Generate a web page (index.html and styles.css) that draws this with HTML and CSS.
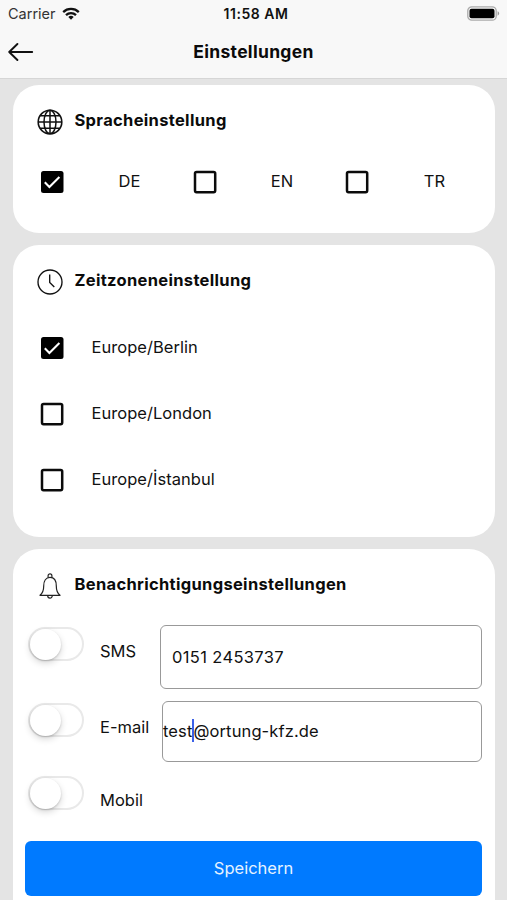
FILE: index.html
```
<!DOCTYPE html>
<html lang="de">
<head>
<meta charset="utf-8">
<title>Einstellungen</title>
<link rel="stylesheet" href="styles.css">
</head>
<body>
<header class="top">
  <div class="status">
    <div class="carrier"><span>Carrier</span>
      <svg class="wifi" width="18" height="14" viewBox="0 0 18 14" fill="none" stroke="#111" stroke-width="2.3"><path d="M1.2 5.1a11.2 11.2 0 0 1 15.6 0M4 8.1a7.2 7.2 0 0 1 10 0"/><path d="M9 12.8 6.3 10.1a3.900 3.900 0 0 1 5.400 0z" fill="#111" stroke="none"/></svg>
    </div>
    <span class="time">11:58 AM</span>
    <svg class="battery" width="33" height="15" viewBox="0 0 33 15"><rect x=".8" y=".8" width="28.4" height="13.4" rx="4" fill="#f8f8f8" stroke="#aaa" stroke-width="1.3"/><rect x="2.5" y="2.7" width="25" height="9.6" rx="2" fill="#000"/><path d="M30.6 5.3q1.5.6 1.5 2.2t-1.5 2.2z" fill="#999"/></svg>
  </div>
  <div class="navbar">
    <svg class="back" width="26" height="20" viewBox="0 0 26 20" fill="none" stroke="#111" stroke-width="1.9" stroke-linecap="round" stroke-linejoin="round"><path d="M9.400 2 1.200 10l8.200 8M1.200 10h23"/></svg>
    <h1>Einstellungen</h1>
  </div>
</header>
<main class="cards">
  <section class="card language">
    <div class="heading">
      <svg width="26" height="26" viewBox="0 0 26 26" fill="none" stroke="#111" stroke-width="1.5"><circle cx="13" cy="13" r="11.800" stroke-width="1.600"/><ellipse cx="13" cy="13" rx="6" ry="11.800"/><path d="M13 1v24M1 13h24M3.200 6.800h19.600M3.200 19.200h19.600"/></svg>
      <h2>Spracheinstellung</h2>
    </div>
    <div class="languages">
      <label class="option"><svg class="box" viewBox="0 0 24 24"><rect x="1" y="1" width="22.500" height="22" rx="2.500"/><path d="m4.800 12.300 4.600 4.600 10-9.900" fill="none" stroke="#fff" stroke-width="2.100"/></svg><span>DE</span></label>
      <label class="option"><svg class="box empty" viewBox="0 0 24 24"><rect x="2" y="2" width="20.200" height="20.200" rx="1.600"/></svg><span>EN</span></label>
      <label class="option"><svg class="box empty" viewBox="0 0 24 24"><rect x="2" y="2" width="20.200" height="20.200" rx="1.600"/></svg><span>TR</span></label>
    </div>
  </section>
  <section class="card timezone">
    <div class="heading">
      <svg width="26" height="26" viewBox="0 0 26 26" fill="none" stroke="#111" stroke-width="1.350"><circle cx="13" cy="13" r="12"/><path d="M12.700 5.500v8l4.600 4.600"/></svg>
      <h2>Zeitzoneneinstellung</h2>
    </div>
    <div class="zones">
      <label class="zone"><svg class="box" viewBox="0 0 24 24"><rect x="1" y="1" width="22.500" height="22" rx="2.500"/><path d="m4.800 12.300 4.600 4.600 10-9.900" fill="none" stroke="#fff" stroke-width="2.100"/></svg><span>Europe/Berlin</span></label>
      <label class="zone"><svg class="box empty" viewBox="0 0 24 24"><rect x="2" y="2" width="20.200" height="20.200" rx="1.600"/></svg><span>Europe/London</span></label>
      <label class="zone"><svg class="box empty" viewBox="0 0 24 24"><rect x="2" y="2" width="20.200" height="20.200" rx="1.600"/></svg><span>Europe/İstanbul</span></label>
    </div>
  </section>
  <section class="card notify">
    <div class="heading">
      <svg width="26" height="26" viewBox="0 0 26 26" fill="none" stroke="#222" stroke-width="1.200" stroke-linejoin="round"><path d="M3 22.300c2.600-2 3.700-4.800 3.700-9.300 0-5.200 2.200-8.600 6.300-8.600s6.300 3.400 6.300 8.600c0 4.500 1.100 7.300 3.700 9.300z"/><path d="M11.100 4.600V2.700a1.900 1.900 0 0 1 3.800 0v1.900M10.700 22.500a2.300 2.700 0 0 0 4.600 0"/></svg>
      <h2>Benachrichtigungseinstellungen</h2>
    </div>
    <div class="channel sms"><span class="switch"><i></i></span><span class="name">SMS</span><div class="field">0151 2453737</div></div>
    <div class="channel mail"><span class="switch"><i></i></span><span class="name">E-mail</span><div class="field">test<b class="caret"></b>@ortung-kfz.de</div></div>
    <div class="channel mobile"><span class="switch"><i></i></span><span class="name">Mobil</span></div>
    <button class="save" type="button">Speichern</button>
  </section>
</main>
</body>
</html>
```
FILE: styles.css
```
* { box-sizing: border-box; }
html { height: 900px; overflow: hidden; }
body {
  margin: 0;
  height: 900px;
  overflow: hidden;
  background: #e4e4e4;
  color: #111;
  font: 16.5px/22px Inter, "Liberation Sans", sans-serif;
}
h1, h2 { margin: 0; color: #0b0b0b; font-weight: 700; }
svg { display: block; flex: none; }

.top { height: 79px; background: #f8f8f8; border-bottom: 1px solid #d6d6d6; }
.status {
  display: grid;
  grid-template-columns: 1fr auto 1fr;
  height: 27px;
  padding: 0 7px 0 8px;
  align-items: center;
  font-size: 14.5px;
}
.carrier { display: flex; gap: 7px; align-items: center; color: #333; }
.wifi { margin-left: -1px; }
.time { padding-left: 4px; font-weight: 600; font-size: 14px; letter-spacing: .55px; color: #111; }
.battery { justify-self: end; }
.navbar { display: grid; grid-template-columns: 26px 1fr 26px; align-items: center; height: 49px; padding: 0 8px; }
h1 { font-size: 17.5px; letter-spacing: .3px; text-align: center; padding-top: 1px; }

.cards { display: flex; flex-direction: column; gap: 12px; padding: 6px 12px 0 13px; }
.card { background: #fff; border-radius: 26px; }
.language { height: 148px; }
.timezone { height: 292px; }
.notify { height: 390px; padding: 0 13px 0 12px; }
.heading { display: flex; align-items: center; gap: 12px; padding: 24px 0 0 24px; height: 50px; }
.heading h2 { margin-left: -.5px; padding-bottom: 4px; font-size: 16.5px; letter-spacing: .32px; }
.notify .heading { padding-left: 12px; }
.box { width: 24px; height: 24px; }
.empty rect { fill: #fff; stroke: #0b0b0b; stroke-width: 2.5px; }

.languages { display: grid; grid-template-columns: repeat(3, 152.5px); padding: 35px 0 0 27px; }
.option { display: flex; align-items: center; }
.option span { width: 128px; padding: 0 0 2px 3px; text-align: center; }
.zones { display: flex; flex-direction: column; gap: 42px; padding: 41px 0 0 27px; }
.zone { display: flex; align-items: center; gap: 27.5px; }
.zone span { padding-bottom: 2px; letter-spacing: .04px; }

.channel { display: grid; grid-template-columns: 57px 18px 61px 1fr; align-items: start; }
.switch { grid-column: 1; display: block; width: 56px; height: 34px; margin: 2px 0 0 3px; border: 2px solid #e9e9e9; border-radius: 17px; }
.switch i { display: block; width: 31px; height: 31px; margin: -.5px; border-radius: 50%; background: #fff; box-shadow: 0 3px 7px rgba(0,0,0,.16), 0 1px 2px rgba(0,0,0,.16); }
.name { grid-column: 3; padding-top: 15px; }
.field { grid-column: 4; display: flex; align-items: center; height: 64px; margin-left: -1px; padding: 0 0 1px 11px; border: 1.5px solid #999; border-radius: 6px; letter-spacing: .35px; }
.sms { margin-top: 26px; }
.mail { margin-top: 12px; }
.mail .field { height: 61px; margin-left: 1px; padding: 0 0 2px; letter-spacing: .12px; }
.mobile { margin-top: 12px; height: 57px; }
.caret { width: 2px; height: 23px; margin: 0 -1px 0 0; background: #3c62e8; }
.save { display: block; width: 100%; height: 55px; margin-top: 10px; padding: 0 0 2px; border: 0; border-radius: 6px; background: #007aff; color: #e6f2ff; font: inherit; text-align: center; }
```
